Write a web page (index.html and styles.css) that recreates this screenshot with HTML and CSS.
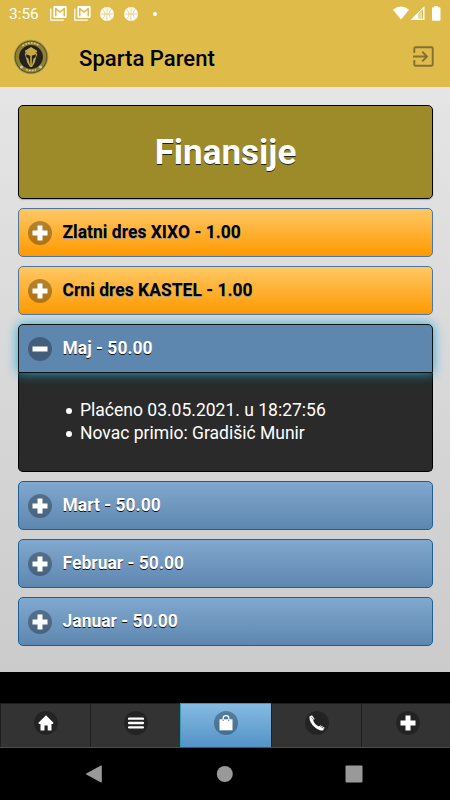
FILE: index.html
```html
<!DOCTYPE html>
<html lang="bs">
<head>
<meta charset="utf-8">
<title>Sparta Parent</title>
<link rel="stylesheet" href="styles.css">
</head>
<body>
<svg class="defs" aria-hidden="true">
  <symbol id="gmail" viewBox="0 0 17 15">
    <path d="M.800 2.500v11.700h13" fill="none" stroke="#fff" stroke-width="1.300"/>
    <path fill="#fff" fill-rule="evenodd" d="M4.500 0h11q1.200 0 1.200 1.200v9.600q0 1.200-1.200 1.200h-11q-1.200 0-1.200-1.200V1.200Q3.300 0 4.500 0zM5 2v8.300h1.500V4.200L10 7l3.500-2.800v6.100H15V2h-1.200L10 5 6.200 2z"/>
  </symbol>
  <symbol id="ball" viewBox="0 0 14 14">
    <circle cx="7" cy="7" r="7" fill="#fff"/>
    <path d="M7 0v14M0 7h14M2.500 1.800q5 5.200 0 10.400M11.500 1.800q-5 5.200 0 10.400" fill="none" stroke="#dfbb4a" stroke-width=".6"/>
  </symbol>
  <symbol id="plus" viewBox="0 0 16 16"><path fill="#fff" d="M5.500.5h5v5h5v5h-5v5h-5v-5h-5v-5h5z"/></symbol>
  <symbol id="minus" viewBox="0 0 16 16"><path fill="#fff" d="M.5 5.500h15v5H.5z"/></symbol>
</svg>

<header class="top">
  <div class="status">
    <span class="clock">3:56</span>
    <svg class="s-mail"><use href="#gmail"/></svg>
    <svg class="s-mail"><use href="#gmail"/></svg>
    <svg class="s-ball"><use href="#ball"/></svg>
    <svg class="s-ball"><use href="#ball"/></svg>
    <i class="dot"></i>
    <svg class="s-system" viewBox="0 0 49 16">
      <path fill="#fff" d="M0 3.700Q8 -2.700 16 3.700L8 13.500z"/>
      <path fill="#fff" fill-rule="evenodd" d="M17.500 14L31.500 0v14zM25.500 7.500V12.500h4.500V3z"/>
      <path fill="#fff" opacity=".5" d="M26.300 7.700L29 5v7h-2.700z"/>
      <path fill="#fff" d="M41.500 0h3.500v1.300h1.500q1 0 1 1v11.400q0 1-1 1h-6.500q-1 0-1-1V2.300q0-1 1-1h1.500z"/>
    </svg>
  </div>
  <div class="appbar">
    <svg class="logo" viewBox="0 0 36 36">
      <circle cx="18" cy="18" r="17.300" fill="#a79a50"/>
      <circle cx="18" cy="18" r="16.300" fill="#4d472b"/>
      <circle cx="18" cy="18" r="13.700" fill="none" stroke="#91812d" stroke-width="3.600"/>
      <circle cx="18" cy="18" r="11.300" fill="#242322" stroke="#171712" stroke-width=".7"/>
      <path d="M9.500 6.800Q18 1.200 26.500 6.800M13 30.600Q18 32.600 23 30.600" fill="none" stroke="#ddd07c" stroke-width="1.500" stroke-dasharray="1.800 1.200"/>
      <circle cx="8.500" cy="28" r="1.500" fill="#c9c8bb"/><circle cx="27.500" cy="28" r="1.500" fill="#c9c8bb"/>
      <path d="M12 11.800L18 8l6 3.800v1.700h-2l2.300 1.200-2.800 9.300-2.500 4h-2l-2.500-4-2.800-9.300L14 13.500h-2z" fill="#c9a943"/>
      <path d="M13 15.200l4.200 1.600v10l-1.800-7.300-2-1.200zM23 15.200l-4.200 1.600v10l1.800-7.300 2-1.200z" fill="#242322"/>
    </svg>
    <h1 class="app-name">Sparta Parent</h1>
    <svg class="exit" viewBox="0 0 21 21" fill="none" stroke="#827037" stroke-width="1.900">
      <path d="M1.300 7V2.500q0-1.200 1.200-1.200h16q1.200 0 1.200 1.200v16q0 1.200-1.200 1.200h-16q-1.200 0-1.200-1.200V14M0 10.500h14M9.200 5.700l4.800 4.800-4.800 4.800"/>
    </svg>
  </div>
</header>

<main class="page">
  <div class="hero"><h2>Finansije</h2></div>
  <section class="row gold"><span class="disc"><svg><use href="#plus"/></svg></span><span class="label">Zlatni dres XIXO - 1.00</span></section>
  <section class="row gold"><span class="disc"><svg><use href="#plus"/></svg></span><span class="label">Crni dres KASTEL - 1.00</span></section>
  <section class="open">
    <div class="row active"><span class="disc"><svg><use href="#minus"/></svg></span><span class="label">Maj - 50.00</span></div>
    <div class="detail">
      <ul>
        <li>Plaćeno 03.05.2021. u 18:27:56</li>
        <li>Novac primio: Gradišić Munir</li>
      </ul>
    </div>
  </section>
  <section class="row blue"><span class="disc"><svg><use href="#plus"/></svg></span><span class="label">Mart - 50.00</span></section>
  <section class="row blue"><span class="disc"><svg><use href="#plus"/></svg></span><span class="label">Februar - 50.00</span></section>
  <section class="row blue"><span class="disc"><svg><use href="#plus"/></svg></span><span class="label">Januar - 50.00</span></section>
</main>

<nav class="tabs">
  <a class="tab"><span class="disc"><svg viewBox="0 0 16 16"><path fill="#fff" d="M8 .3l7.700 7.700-1 1h-1.200v6.500H9.700v-5H6.500v5h-4V9H1.200l-1-1z"/></svg></span></a>
  <a class="tab"><span class="disc"><svg viewBox="0 0 16 16"><path d="M1 3.700h14M1 8h14M1 12.400h14" stroke="#fff" stroke-width="2.300" stroke-linecap="round"/></svg></span></a>
  <a class="tab current"><span class="disc"><svg viewBox="0 0 16 16"><path fill="#fff" d="M1.500 4.300h13v11h-13z"/><path d="M5.200 6V3.300q0-2.600 2.800-2.600t2.800 2.600V6" fill="none" stroke="#fff" stroke-width="1.300"/><path d="M5.200 4.700V6M10.800 4.700V6" stroke="#4a7ba0" stroke-width="1"/></svg></span></a>
  <a class="tab"><span class="disc"><svg viewBox="0 0 16 16"><path fill="#fff" d="M.5 1.500L3 .3l2.700 3.600-1.500 1.700Q5.500 9.500 9.800 11.600l1.700-1.300 4.200 2.500-1.500 2.400Q10.500 16.500 5.500 12 0 7 .5 1.500z"/><path d="M2.500 2.200l2.500 3M11 11l3.800 2.400" stroke="#242424" stroke-width=".6"/></svg></span></a>
  <a class="tab"><span class="disc"><svg><use href="#plus"/></svg></span></a>
</nav>

<footer class="system-nav">
  <svg viewBox="0 0 18 18"><path fill="#999" d="M16 .5q.8-.3.800.5v16q0 .8-.8.500L1.300 9.500q-.8-.5 0-1z"/></svg>
  <svg viewBox="0 0 18 18"><circle cx="9.800" cy="9" r="8" fill="#999"/></svg>
  <svg viewBox="0 0 18 18"><rect x=".5" y=".5" width="17" height="17" rx="1" fill="#999"/></svg>
</footer>
</body>
</html>
```
FILE: styles.css
```css
* { box-sizing: border-box; }
body {
  margin: 0;
  width: 450px;
  height: 800px;
  overflow: hidden;
  background: #000;
  font-family: Roboto, "Liberation Sans", sans-serif;
  display: flex;
  flex-direction: column;
}
svg { display: block; }
.defs { display: none; }

.top { height: 87px; background: #dfbb4a; flex: none; }
.status {
  height: 27px;
  padding: 0 8px 0 9px;
  display: flex;
  align-items: center;
  color: #fff;
}
.clock { width: 41px; font-size: 15.4px; line-height: 27px; padding-top: 1px; }
.s-mail { width: 17px; height: 15px; margin-right: 7px; }
.s-ball { width: 14px; height: 14px; margin: 0 8px 0 2px; }
.dot { width: 4px; height: 4px; border-radius: 50%; background: #fff; margin-left: 7px; }
.s-system { width: 49px; height: 16px; margin-left: auto; }
.appbar {
  height: 60px;
  padding: 0 16px 0 13px;
  display: flex;
  align-items: center;
}
.logo { width: 36px; height: 36px; }
.app-name {
  margin: 1px 0 0 30px;
  font-size: 22.1px;
  font-weight: 500;
  line-height: 30px;
  color: #000;
}
.exit { width: 21px; height: 21px; margin: -1px 0 0 auto; }

.page {
  height: 585px;
  flex: none;
  padding: 18px 17px 0 18px;
  display: flex;
  flex-direction: column;
  gap: 9px;
  background: linear-gradient(#e5e5e5, #cbcbcb);
}
.hero {
  height: 94px;
  border: 1px solid #000;
  border-radius: 5px;
  background: #9c8b28;
  display: flex;
  align-items: center;
  justify-content: center;
  box-shadow: 0 1px 1px rgba(0, 0, 0, .25);
}
.hero h2 {
  margin: 0;
  padding-top: 2px;
  color: #fff;
  font-size: 35px;
  line-height: 44px;
  text-shadow: 0 1px 0 #222;
}
.row {
  height: 49px;
  padding: 0 10px 0 9px;
  border: 1px solid #1f5f93;
  border-radius: 5px;
  display: flex;
  align-items: center;
  gap: 10.5px;
  font-size: 17.5px;
  font-weight: 700;
  line-height: 20px;
  color: #fff;
  text-shadow: 0 1px 0 #111;
}
.label { margin-bottom: 1px; }
.gold {
  background: linear-gradient(#ffc864, #ff9900);
  border-color: #4d76a0;
  color: #000;
  text-shadow: 0 1px 0 #999;
}
.blue { background: linear-gradient(#81a8ce, #5e87b0); }
.disc {
  width: 24px;
  height: 24px;
  border-radius: 50%;
  background: rgba(0, 0, 0, .3);
  display: flex;
  align-items: center;
  justify-content: center;
  flex: none;
}
.disc svg { width: 16px; height: 16px; }
.open { height: 148px; }
.active {
  background: #5e87b0;
  border-color: #111;
  border-radius: 5px 5px 0 0;
  box-shadow: 0 0 12px #22aadd;
  position: relative;
}
.detail {
  height: 99px;
  border: 1px solid #000;
  border-top: 0;
  border-radius: 0 0 5px 5px;
  background: #2a2a2a;
  color: #fff;
  font-size: 17.52px;
  line-height: 23px;
}
.detail ul { margin: 0; padding: 26px 0 0 47px; list-style: none; }
.detail li { display: flex; align-items: center; gap: 8px; }
.detail li::before {
  content: "";
  width: 6px;
  height: 6px;
  border-radius: 50%;
  background: #fff;
}

.tabs {
  height: 45px;
  flex: none;
  margin-top: 31px;
  display: grid;
  grid-template-columns: 90px 90px 91px 90px 89px;
  border-bottom: 1px solid #36536c;
}
.tab {
  background: #333;
  border: 1px solid #1f1f1f;
  border-width: 1px 0 0 1px;
  display: flex;
  justify-content: center;
  padding-top: 7px;
}
.tab:last-child { padding-left: 4px; }
.current { background: linear-gradient(#85bae4, #5393c5); border-color: #349bb8; }

.system-nav {
  height: 52px;
  display: flex;
  justify-content: space-between;
  align-items: center;
  padding: 0 87px 0 85px;
}
.system-nav svg { width: 18px; height: 18px; }
```
